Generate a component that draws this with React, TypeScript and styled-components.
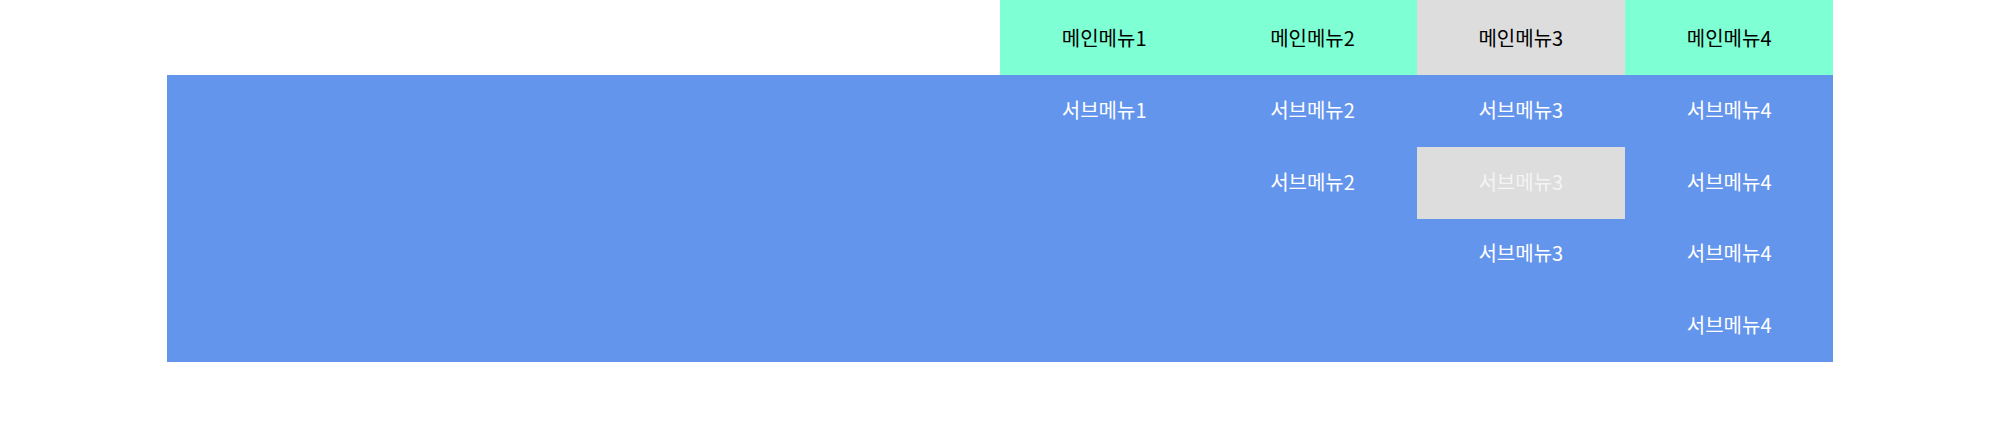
import styled, { createGlobalStyle } from 'styled-components';

const GlobalStyle = createGlobalStyle`
  body {
    margin: 0;
    background: #fff;
    font-family: 'Noto Sans CJK KR', 'Noto Sans', sans-serif;
  }
  ul {
    list-style: none;
    margin: 0;
    padding: 0;
  }
`;

const Wrapper = styled.nav`
  width: 83.3333%;
  margin: 0 auto;
`;

const MainBar = styled.ul`
  display: flex;
  justify-content: flex-end;
`;

const MainItem = styled.li<{ $active?: boolean }>`
  width: 208.333px;
  height: 75.33px;
  display: flex;
  align-items: center;
  justify-content: center;
  background: ${(props) => (props.$active ? '#dddddd' : '#7fffd4')};
  color: #000;
  font-size: 20px;
`;

const SubPanel = styled.div`
  display: flex;
  justify-content: flex-end;
  height: 286.4px;
  background: #6495ed;
`;

const SubColumn = styled.ul`
  width: 208.333px;
`;

const SubItem = styled.li<{ $active?: boolean }>`
  height: 71.6px;
  padding-bottom: 3px;
  box-sizing: border-box;
  display: flex;
  align-items: center;
  justify-content: center;
  background: ${(props) => (props.$active ? '#dddddd' : 'transparent')};
  color: ${(props) => (props.$active ? '#f4f4f4' : '#fff')};
  font-size: 20px;
`;

const menus = [1, 2, 3, 4];

const App = () => {
  return (
    <Wrapper>
      <GlobalStyle />
      <MainBar>
        {menus.map((n) => (
          <MainItem key={n} $active={n === 3}>
            메인메뉴{n}
          </MainItem>
        ))}
      </MainBar>
      <SubPanel>
        {menus.map((n) => (
          <SubColumn key={n}>
            {Array.from({ length: n }).map((_, i) => (
              <SubItem key={i} $active={n === 3 && i === 1}>
                서브메뉴{n}
              </SubItem>
            ))}
          </SubColumn>
        ))}
      </SubPanel>
    </Wrapper>
  );
};

export default App;
